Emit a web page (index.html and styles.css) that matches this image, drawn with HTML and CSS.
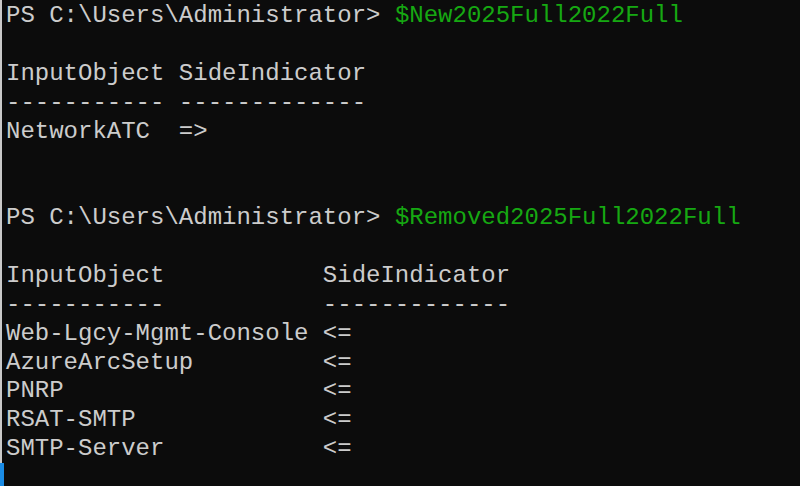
FILE: index.html
```html
<!DOCTYPE html>
<html>
<head>
<meta charset="utf-8">
<link rel="stylesheet" href="styles.css">
</head>
<body>
<div class="window">
  <div class="edge"><div class="edge-gray"></div><div class="edge-blue"></div></div>
  <pre class="console">PS C:\Users\Administrator> <span class="var">$New2025Full2022Full</span>

InputObject SideIndicator
----------- -------------
NetworkATC  =&gt;


PS C:\Users\Administrator> <span class="var">$Removed2025Full2022Full</span>

InputObject           SideIndicator
-----------           -------------
Web-Lgcy-Mgmt-Console &lt;=
AzureArcSetup         &lt;=
PNRP                  &lt;=
RSAT-SMTP             &lt;=
SMTP-Server           &lt;=
</pre>
</div>
</body>
</html>
```
FILE: styles.css
```css
html, body {
  margin: 0;
  padding: 0;
  background: #0c0c0c;
  width: 800px;
  height: 486px;
  overflow: hidden;
}
.window {
  display: flex;
  height: 486px;
}
.edge {
  width: 4px;
  display: flex;
  flex-direction: column;
}
.edge-gray {
  flex: 1;
  width: 2px;
  background: #c9c9c9;
}
.edge-blue {
  height: 23px;
  width: 4px;
  background: #1a8ce6;
}
.console {
  margin: 0;
  padding: 2px 0 0 2px;
  font-family: "Liberation Mono", monospace;
  font-size: 24px;
  line-height: 28.87px;
  color: #cccccc;
  white-space: pre;
}
.var {
  color: #16a812;
}
```
